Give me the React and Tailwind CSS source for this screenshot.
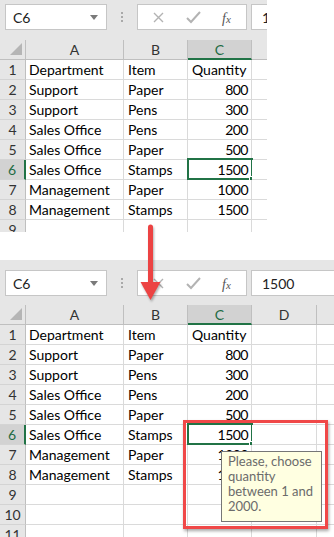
import React from "react";

const cols = [
  { key: "A", w: 98 },
  { key: "B", w: 64 },
  { key: "C", w: 64 },
  { key: "D", w: 65 },
  { key: "E", w: 64 },
];

const data = [
  ["Department", "Item", "Quantity"],
  ["Support", "Paper", 800],
  ["Support", "Pens", 300],
  ["Sales Office", "Pens", 200],
  ["Sales Office", "Paper", 500],
  ["Sales Office", "Stamps", 1500],
  ["Management", "Paper", 1000],
  ["Management", "Stamps", 1500],
  ["", "", ""],
  ["", "", ""],
  ["", "", ""],
];

const Toolbar = ({ top, formula }) => (
  <div className={`flex items-start shrink-0 ${top}`}>
    <div className="ml-[5px] w-[102px] shrink-0 h-[26px] bg-white border border-[#c6c6c6] flex items-center justify-between pl-[7px] pr-[8px]">
      <span className="text-[14px] text-[#222]">C6</span>
      <svg width="8" height="5" viewBox="0 0 8 5">
        <path d="M0 0 L8 0 L4 5 Z" fill="#7a7a7a" />
      </svg>
    </div>
    <div className="w-[30px] shrink-0 h-[26px] flex flex-col items-center justify-center gap-[2px]">
      <span className="w-[2px] h-[2px] bg-[#a9a9a9]" />
      <span className="w-[2px] h-[2px] bg-[#a9a9a9]" />
      <span className="w-[2px] h-[2px] bg-[#a9a9a9]" />
    </div>
    <div className="w-[110px] shrink-0 h-[26px] bg-white border border-[#c6c6c6] relative">
      <svg className="absolute left-[15px] top-[7px]" width="11" height="11" viewBox="0 0 11 11">
        <path d="M1 1 L10 10 M10 1 L1 10" stroke="#b3b3b3" strokeWidth="1.4" />
      </svg>
      <svg className="absolute left-[48px] top-[6px]" width="15" height="13" viewBox="0 0 15 13">
        <path d="M1 7 L5 11 L14 1" stroke="#b3b3b3" strokeWidth="2" fill="none" />
      </svg>
      <span className="absolute left-[84px] top-[3px] italic text-[14px] text-[#555]" style={{ fontFamily: '"Liberation Serif", serif' }}>
        f<span className="text-[11px]">x</span>
      </span>
    </div>
    <div className="ml-[4px] w-[100px] shrink-0 h-[26px] bg-white border border-[#c6c6c6] flex items-center pl-[10px] text-[14px] text-[#222]">
      {formula}
    </div>
  </div>
);

const Sheet = ({ top, formula, nrows }) => (
  <div className="flex flex-col w-[400px] h-full bg-[#e6e6e6]">
    <Toolbar top={top} formula={formula} />
    <div className="flex h-[20px] shrink-0">
      <div className="w-[26px] shrink-0 h-[20px] border-r border-b border-[#bfbfbf] relative">
        <svg className="absolute left-[10px] top-[3px]" width="12" height="12" viewBox="0 0 12 12">
          <path d="M12 0 L12 12 L0 12 Z" fill="#b5b5b5" />
        </svg>
      </div>
      {cols.map((c) => (
        <div
          key={c.key}
          style={{ width: c.w }}
          className={`h-[20px] shrink-0 flex items-center justify-center border-r text-[14px] ${
            c.key === "C"
              ? "bg-[#d2d2d2] border-b-2 border-b-[#217346] border-r-[#bfbfbf] text-[#1e6b44]"
              : "border-b border-[#bfbfbf] text-[#333]"
          }`}
        >
          {c.key}
        </div>
      ))}
    </div>
    {data.slice(0, nrows).map((r, i) => (
      <div key={i} className="flex h-[20px] shrink-0">
        <div
          className={`w-[26px] h-[20px] shrink-0 flex items-center justify-center border-b border-[#d4d4d4] text-[14px] ${
            i === 5 ? "bg-[#d2d2d2] border-r-2 border-r-[#217346] text-[#1e6b44]" : "border-r border-r-[#bfbfbf] text-[#333]"
          }`}
        >
          {i + 1}
        </div>
        {cols.map((c, j) => {
          const v = r[j];
          const num = typeof v === "number";
          return (
            <div
              key={c.key}
              style={{ width: c.w }}
              className={`relative h-[20px] shrink-0 bg-white border-r border-b border-[#dadada] flex items-center text-[14px] text-[#000] whitespace-nowrap ${
                num ? "justify-end pr-[3px] tracking-[-0.5px]" : j === 0 ? "pl-[3px]" : "pl-[4px]"
              }`}
            >
              {v}
              {i === 5 && c.key === "C" && (
                <div className="absolute -left-[1px] -top-[2px] w-[66px] h-[22px] border-2 border-[#217346]">
                  <div className="absolute -right-[4px] -bottom-[4px] w-[6px] h-[6px] bg-[#217346] border border-white" />
                </div>
              )}
            </div>
          );
        })}
      </div>
    ))}
  </div>
);

export default function App() {
  return (
    <div
      className="relative w-[334px] h-[537px] bg-white overflow-hidden"
      style={{ fontFamily: 'Lato, "Liberation Sans", sans-serif' }}
    >
      <div className="w-[267px] h-[232px] overflow-hidden">
        <Sheet top="h-[40px] pt-[4px]" formula="1500" nrows={9} />
      </div>
      <div className="mt-[28px] w-[334px] h-[277px] overflow-hidden">
        <Sheet top="h-[45px] pt-[10px]" formula="1500" nrows={11} />
      </div>

      <svg className="absolute left-[138px] top-[224px] drop-shadow-[1px_2px_1px_rgba(0,0,0,0.3)]" width="24" height="78" viewBox="0 0 24 78">
        <path d="M12.5 3 L12.5 60" stroke="#ec4343" strokeWidth="5" strokeLinecap="round" />
        <path d="M2.5 58 L22.5 58 L12.5 76 Z" fill="#ec4343" />
      </svg>

      <div className="absolute left-[183px] top-[420px] w-[145px] h-[109px] border-[3px] border-[#f04848] shadow-[1px_2px_3px_rgba(0,0,0,0.35)]" />

      <div className="absolute left-[221px] top-[451px] w-[101px] h-[71px] bg-[#ffffe1] border border-[#767676] pl-[6px] pt-[2px] text-[13px] leading-[15px] text-[#6b6b6b]">
        Please, choose
        <br />
        quantity
        <br />
        between 1 and
        <br />
        2000.
      </div>
    </div>
  );
}
